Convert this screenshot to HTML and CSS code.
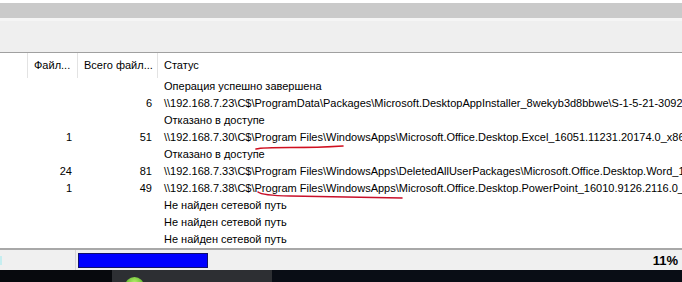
FILE: index.html
```html
<!DOCTYPE html>
<html lang="ru">
<head>
    <meta charset="UTF-8">
    <title>Копирование</title>
    <link rel="stylesheet" href="styles.css">
</head>
<body>
    <div class="window">
        <div class="topBand"></div>
        <div class="toolbar"></div>

        <div class="list">
            <div class="row listHead">
                <div class="cell"></div>
                <div class="cell sep">Файл...</div>
                <div class="cell sep">Всего файл...</div>
                <div class="cell sep status">Статус</div>
            </div>

            <div class="row">
                <div class="cell"></div><div class="cell num"></div><div class="cell num"></div>
                <div class="cell status">Операция успешно завершена</div>
            </div>
            <div class="row">
                <div class="cell"></div><div class="cell num"></div><div class="cell num">6</div>
                <div class="cell status">\\192.168.7.23\C$\ProgramData\Packages\Microsoft.DesktopAppInstaller_8wekyb3d8bbwe\S-1-5-21-3092912345-1234</div>
            </div>
            <div class="row">
                <div class="cell"></div><div class="cell num"></div><div class="cell num"></div>
                <div class="cell status">Отказано в доступе</div>
            </div>
            <div class="row">
                <div class="cell"></div><div class="cell num">1</div><div class="cell num">51</div>
                <div class="cell status">\\192.168.7.30\C$\Program Files\WindowsApps\Microsoft.Office.Desktop.Excel_16051.11231.20174.0_x86__8wekyb3d8bbwe</div>
            </div>
            <div class="row">
                <div class="cell"></div><div class="cell num"></div><div class="cell num"></div>
                <div class="cell status">Отказано в доступе</div>
            </div>
            <div class="row">
                <div class="cell"></div><div class="cell num">24</div><div class="cell num">81</div>
                <div class="cell status">\\192.168.7.33\C$\Program Files\WindowsApps\DeletedAllUserPackages\Microsoft.Office.Desktop.Word_16051.11231</div>
            </div>
            <div class="row">
                <div class="cell"></div><div class="cell num">1</div><div class="cell num">49</div>
                <div class="cell status">\\192.168.7.38\C$\Program Files\WindowsApps\Microsoft.Office.Desktop.PowerPoint_16010.9126.2116.0_x86__8wekyb3d8bbwe</div>
            </div>
            <div class="row">
                <div class="cell"></div><div class="cell num"></div><div class="cell num"></div>
                <div class="cell status">Не найден сетевой путь</div>
            </div>
            <div class="row">
                <div class="cell"></div><div class="cell num"></div><div class="cell num"></div>
                <div class="cell status">Не найден сетевой путь</div>
            </div>
            <div class="row">
                <div class="cell"></div><div class="cell num"></div><div class="cell num"></div>
                <div class="cell status">Не найден сетевой путь</div>
            </div>

            <!-- hand drawn red marks over the list -->
            <svg class="marks" width="682" height="195" viewBox="0 0 682 195">
                <path d="M256 96 Q262 94.5 290 94.5 T343 93" fill="none" stroke="#d01020" stroke-width="1.6" stroke-linecap="round" />
                <path d="M258 139 Q262 142.5 290 143 T402 145" fill="none" stroke="#c8102a" stroke-width="1.6" stroke-linecap="round" />
            </svg>
        </div>

        <div class="statusBar">
            <div class="statusLeft"><span class="tick"></span></div>
            <div class="progress"><div class="progressFill"></div></div>
            <div class="percent">11%</div>
        </div>

        <div class="taskbar">
            <div class="taskDark"></div>
            <div class="taskApp"><span class="appIcon"></span></div>
            <div class="taskRest"></div>
        </div>
    </div>
</body>
</html>
```

FILE: styles.css
```css
* {
    box-sizing: border-box;
}

body {
    margin: 0;
    width: 682px;
    height: 282px;
    overflow: hidden;
    background-color: white;
    font-family: 'Liberation Sans', Arial, sans-serif;
    font-size: 11px;
    color: #000;
}

.window {
    display: flex;
    flex-direction: column;
    height: 282px;
}

.topBand {
    height: 18px;
    border-top: 3px solid #fff;
    background-color: #cacaca;
}

.toolbar {
    height: 35px;
    background-color: #efefef;
    border-top: 3px solid #f5f5f5;
    border-bottom: 1px solid #a0a0a0;
}

.list {
    position: relative;
    height: 195px;
    overflow: hidden;
    background-color: #fff;
}

.row {
    display: grid;
    grid-template-columns: 27px 50px 80px 1fr;
    height: 17px;
    line-height: 17px;
    white-space: nowrap;
}

.listHead {
    height: 25px;
    line-height: 24px;
}

.cell {
    overflow: hidden;
}

.sep {
    border-left: 1px solid #e3e3e3;
    padding-left: 6px;
}

.num {
    text-align: right;
    padding-right: 5px;
}

.status {
    padding-left: 7px;
    overflow: visible;
}

.listHead .status {
    padding-left: 6px;
}

.marks {
    position: absolute;
    top: 0;
    left: 0;
    pointer-events: none;
}

.statusBar {
    display: flex;
    align-items: center;
    height: 22px;
    background-color: #f0f0f0;
    border-top: 2px solid #a8a8a8;
}

.statusLeft {
    width: 76px;
    height: 20px;
    border-right: 1px solid #d6d6d6;
    display: flex;
    align-items: center;
}

.tick {
    width: 2px;
    height: 9px;
    background-color: #c6eef0;
}

.progress {
    margin-left: 2px;
    width: 130px;
    height: 15px;
    border: 1px solid #10106a;
    background-color: #fff;
}

.progressFill {
    height: 100%;
    width: 100%;
    background-color: #0000ff;
}

.percent {
    margin-left: auto;
    padding-right: 4px;
    font-size: 13px;
    font-weight: bold;
}

.taskbar {
    display: flex;
    height: 12px;
    overflow: hidden;
    background-color: #090d15;
}

.taskDark {
    width: 112px;
    background-color: #07090d;
}

.taskApp {
    width: 160px;
    background-color: #2d2f33;
    padding-left: 13px;
    padding-top: 7px;
}

.appIcon {
    display: block;
    width: 19px;
    height: 19px;
    border-radius: 50%;
    background: radial-gradient(circle at 50% 30%, #b5f06a, #4caa1e 70%);
}

.taskRest {
    flex: 1;
}
```
